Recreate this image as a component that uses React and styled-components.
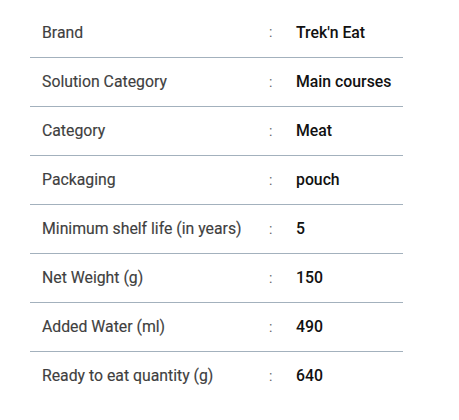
import React from 'react';
import styled, { createGlobalStyle } from "styled-components";

const rows = [
	{ label: "Brand", value: "Trek'n Eat" },
	{ label: "Solution Category", value: "Main courses" },
	{ label: "Category", value: "Meat" },
	{ label: "Packaging", value: "pouch" },
	{ label: "Minimum shelf life (in years)", value: "5" },
	{ label: "Net Weight (g)", value: "150" },
	{ label: "Added Water (ml)", value: "490" },
	{ label: "Ready to eat quantity (g)", value: "640" },
];

const App = () => {
	return (
		<>
			<GlobalStyle />
			<Page>
				<Table>
					<tbody>
						{rows.map((row) => (
							<Row key={row.label}>
								<Label>{row.label}</Label>
								<Colon>:</Colon>
								<Value>{row.value}</Value>
							</Row>
						))}
					</tbody>
				</Table>
			</Page>
		</>
	);
};

const GlobalStyle = createGlobalStyle`
	body {
		margin: 0;
		background: #fff;
		font-family: Roboto, "Liberation Sans", sans-serif;
	}
`;

const Page = styled.div`
	width: 459px;
	height: 420px;
	padding: 8px 0 0 30px;
	box-sizing: border-box;
`;

const Table = styled.table`
	width: 373px;
	border-collapse: collapse;
`;

const Row = styled.tr`
	height: 49px;
	border-bottom: 1px solid #a3b1bd;
	&:last-child {
		border-bottom: none;
	}
`;

const Label = styled.td`
	width: 227px;
	padding: 0 0 0 12px;
	font-size: 15.8px;
	color: #3f3f3f;
	vertical-align: middle;
	-webkit-text-stroke: 0.15px #3f3f3f;
`;

const Colon = styled.td`
	width: 27px;
	padding: 0;
	font-size: 14px;
	color: #666;
`;

const Value = styled.td`
	padding: 0;
	font-size: 15.8px;
	font-weight: 500;
	color: #111;
`;

export default App
